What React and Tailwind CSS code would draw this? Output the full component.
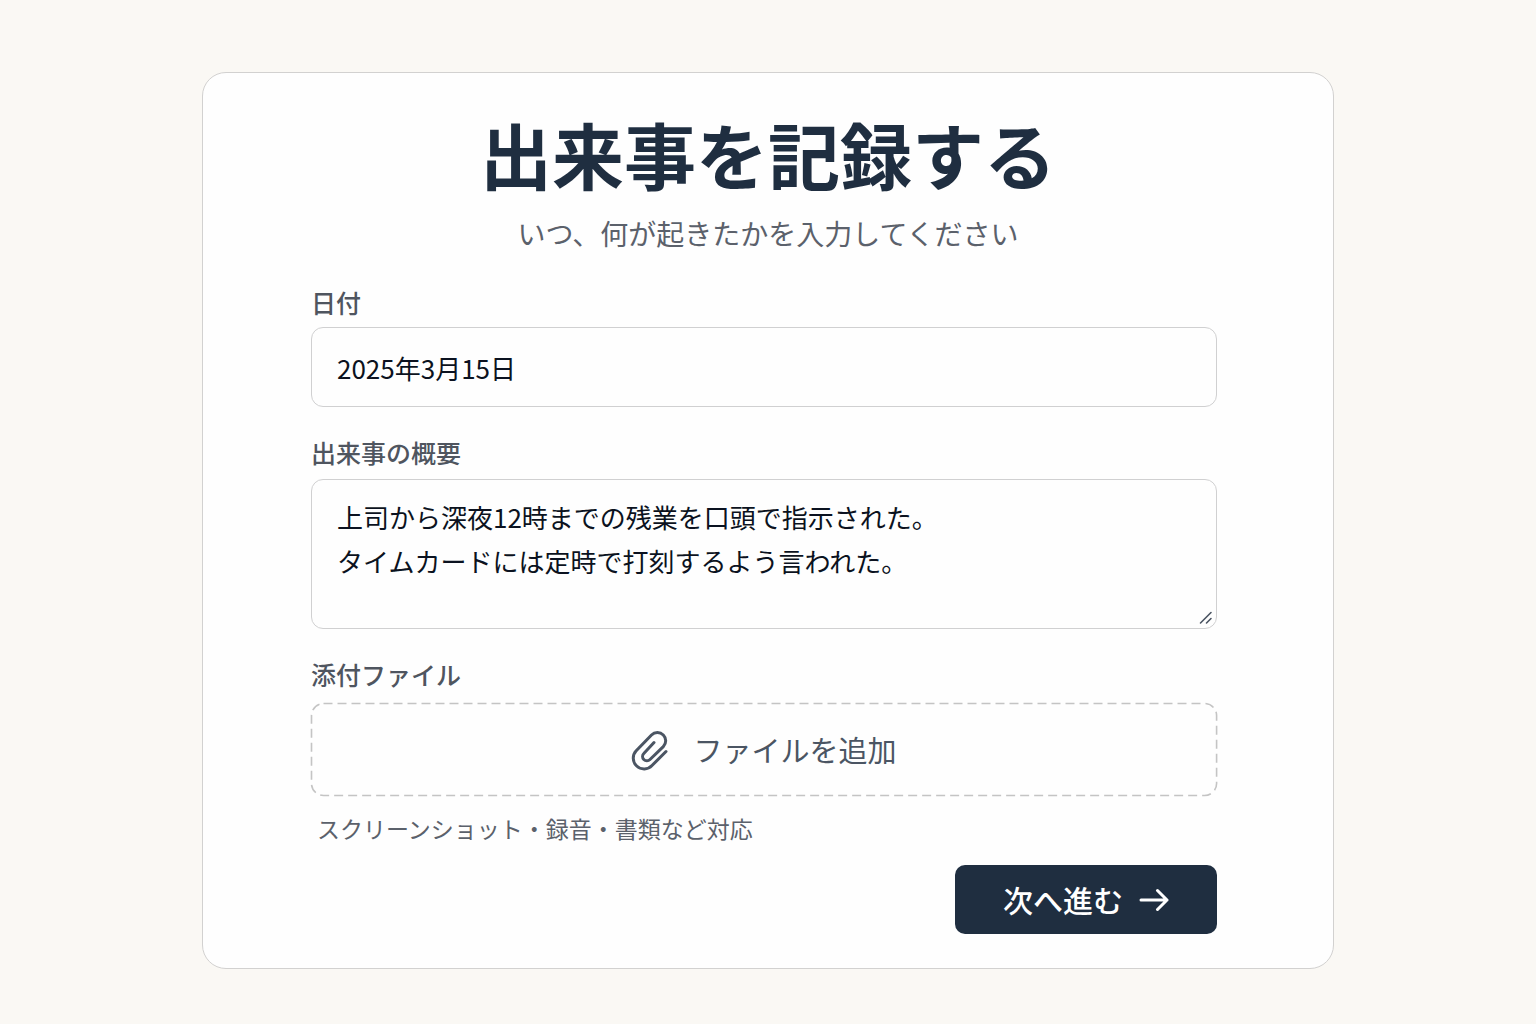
import React, { useRef, useState } from 'react';

const labelClass = 'block w-fit text-[25px] leading-8 font-medium text-[#4f555f]';
const fieldClass =
  'block w-full rounded-xl border border-[#d0d0d1] bg-transparent px-[25px] text-[26px] text-[#0b1220] focus:outline-none focus:border-slate-400';

function PaperclipIcon() {
  return (
    <svg width="38" height="42" viewBox="0 0 38 42" fill="none" stroke="currentColor" strokeWidth="3" strokeLinecap="round" strokeLinejoin="round" aria-hidden="true">
      <path d="M35 22.5 21 36.5a10.8 10.8 0 0 1-15.8-14.8L20.5 6a8.2 8.2 0 0 1 11.8 0 8.2 8.2 0 0 1 0 11.6L19 30.5a4.3 4.3 0 0 1-6.2 0 4.3 4.3 0 0 1 0-6L23 13.500" />
    </svg>
  );
}

function ArrowIcon() {
  return (
    <svg width="30" height="24" viewBox="0 0 30 24" fill="none" stroke="currentColor" strokeWidth="3" strokeLinecap="round" strokeLinejoin="round" aria-hidden="true">
      <path d="M2 12h26M18.5 2.5 28 12l-9.5 9.5" />
    </svg>
  );
}

function ResizeGrip() {
  return (
    <svg className="pointer-events-none absolute right-1 bottom-1 text-[#4b5563]" width="14" height="14" viewBox="0 0 14 14" fill="none" stroke="currentColor" strokeWidth="1.6" strokeLinecap="round" aria-hidden="true">
      <path d="M1.5 12 12 1.5M7.5 12 12 7.5" />
    </svg>
  );
}

export default function App() {
  const [date, setDate] = useState('2025年3月15日');
  const [summary, setSummary] = useState(
    '上司から深夜12時までの残業を口頭で指示された。\nタイムカードには定時で打刻するよう言われた。'
  );
  const fileRef = useRef(null);

  return (
    <main className="min-h-screen bg-[#faf8f4] px-6 pt-[72px] pb-[54px] font-['Noto_Sans_CJK_JP',sans-serif]">
      <section className="mx-auto max-w-[1132px] rounded-3xl border border-[#d2d1d0] bg-[#fefefe] pt-10 pb-[34px]">
        <header className="text-center">
          <h1 className="text-7xl leading-[80px] font-bold text-[#1f2e40]">出来事を記録する</h1>
          <p className="mt-5 text-[28px] leading-10 text-[#5b616b]">いつ、何が起きたかを入力してください</p>
        </header>

        <form className="mt-[33px] pl-[108px] pr-[116px]" onSubmit={(e) => e.preventDefault()}>
          <label htmlFor="date" className={labelClass}>日付</label>
          <input
            id="date"
            type="text"
            value={date}
            onChange={(e) => setDate(e.target.value)}
            className={`${fieldClass} mt-[9px] h-20`}
          />

          <label htmlFor="summary" className={`${labelClass} mt-[29px]`}>出来事の概要</label>
          <div className="relative mt-[11px]">
            <textarea
              id="summary"
              value={summary}
              onChange={(e) => setSummary(e.target.value)}
              className={`${fieldClass} h-[150px] resize-none py-[15px] leading-[44px]`}
            />
            <ResizeGrip />
          </div>

          <label htmlFor="files" className={`${labelClass} mt-[29px]`}>添付ファイル</label>
          <input id="files" ref={fileRef} type="file" multiple tabIndex={-1} className="sr-only" />
          <button
            type="button"
            onClick={() => fileRef.current?.click()}
            className="relative mt-[13px] flex h-[93px] w-full items-center justify-center gap-6 rounded-xl text-[29px] text-[#4b5563]"
          >
            {/* dashed outline, longer dashes than border-dashed gives */}
            <svg className="absolute inset-0 h-full w-full overflow-visible" fill="none" aria-hidden="true">
              <rect x="0.5" y="0.5" width="99.9%" height="92" rx="12" stroke="#c4c4c4" strokeWidth="1.6" strokeDasharray="9 5" />
            </svg>
            <PaperclipIcon />
            <span>ファイルを追加</span>
          </button>
          <p className="mt-4 pl-1.5 text-[23px] leading-8 text-[#5b616b]">スクリーンショット・録音・書類など対応</p>

          <div className="mt-[21px] flex justify-end">
            <button
              type="submit"
              className="flex h-[69px] w-[262px] items-center justify-center gap-4 rounded-[10px] bg-[#1f2e40] text-[30px] font-medium text-white hover:bg-[#2a3b50]"
            >
              次へ進む
              <ArrowIcon />
            </button>
          </div>
        </form>
      </section>
    </main>
  );
}
